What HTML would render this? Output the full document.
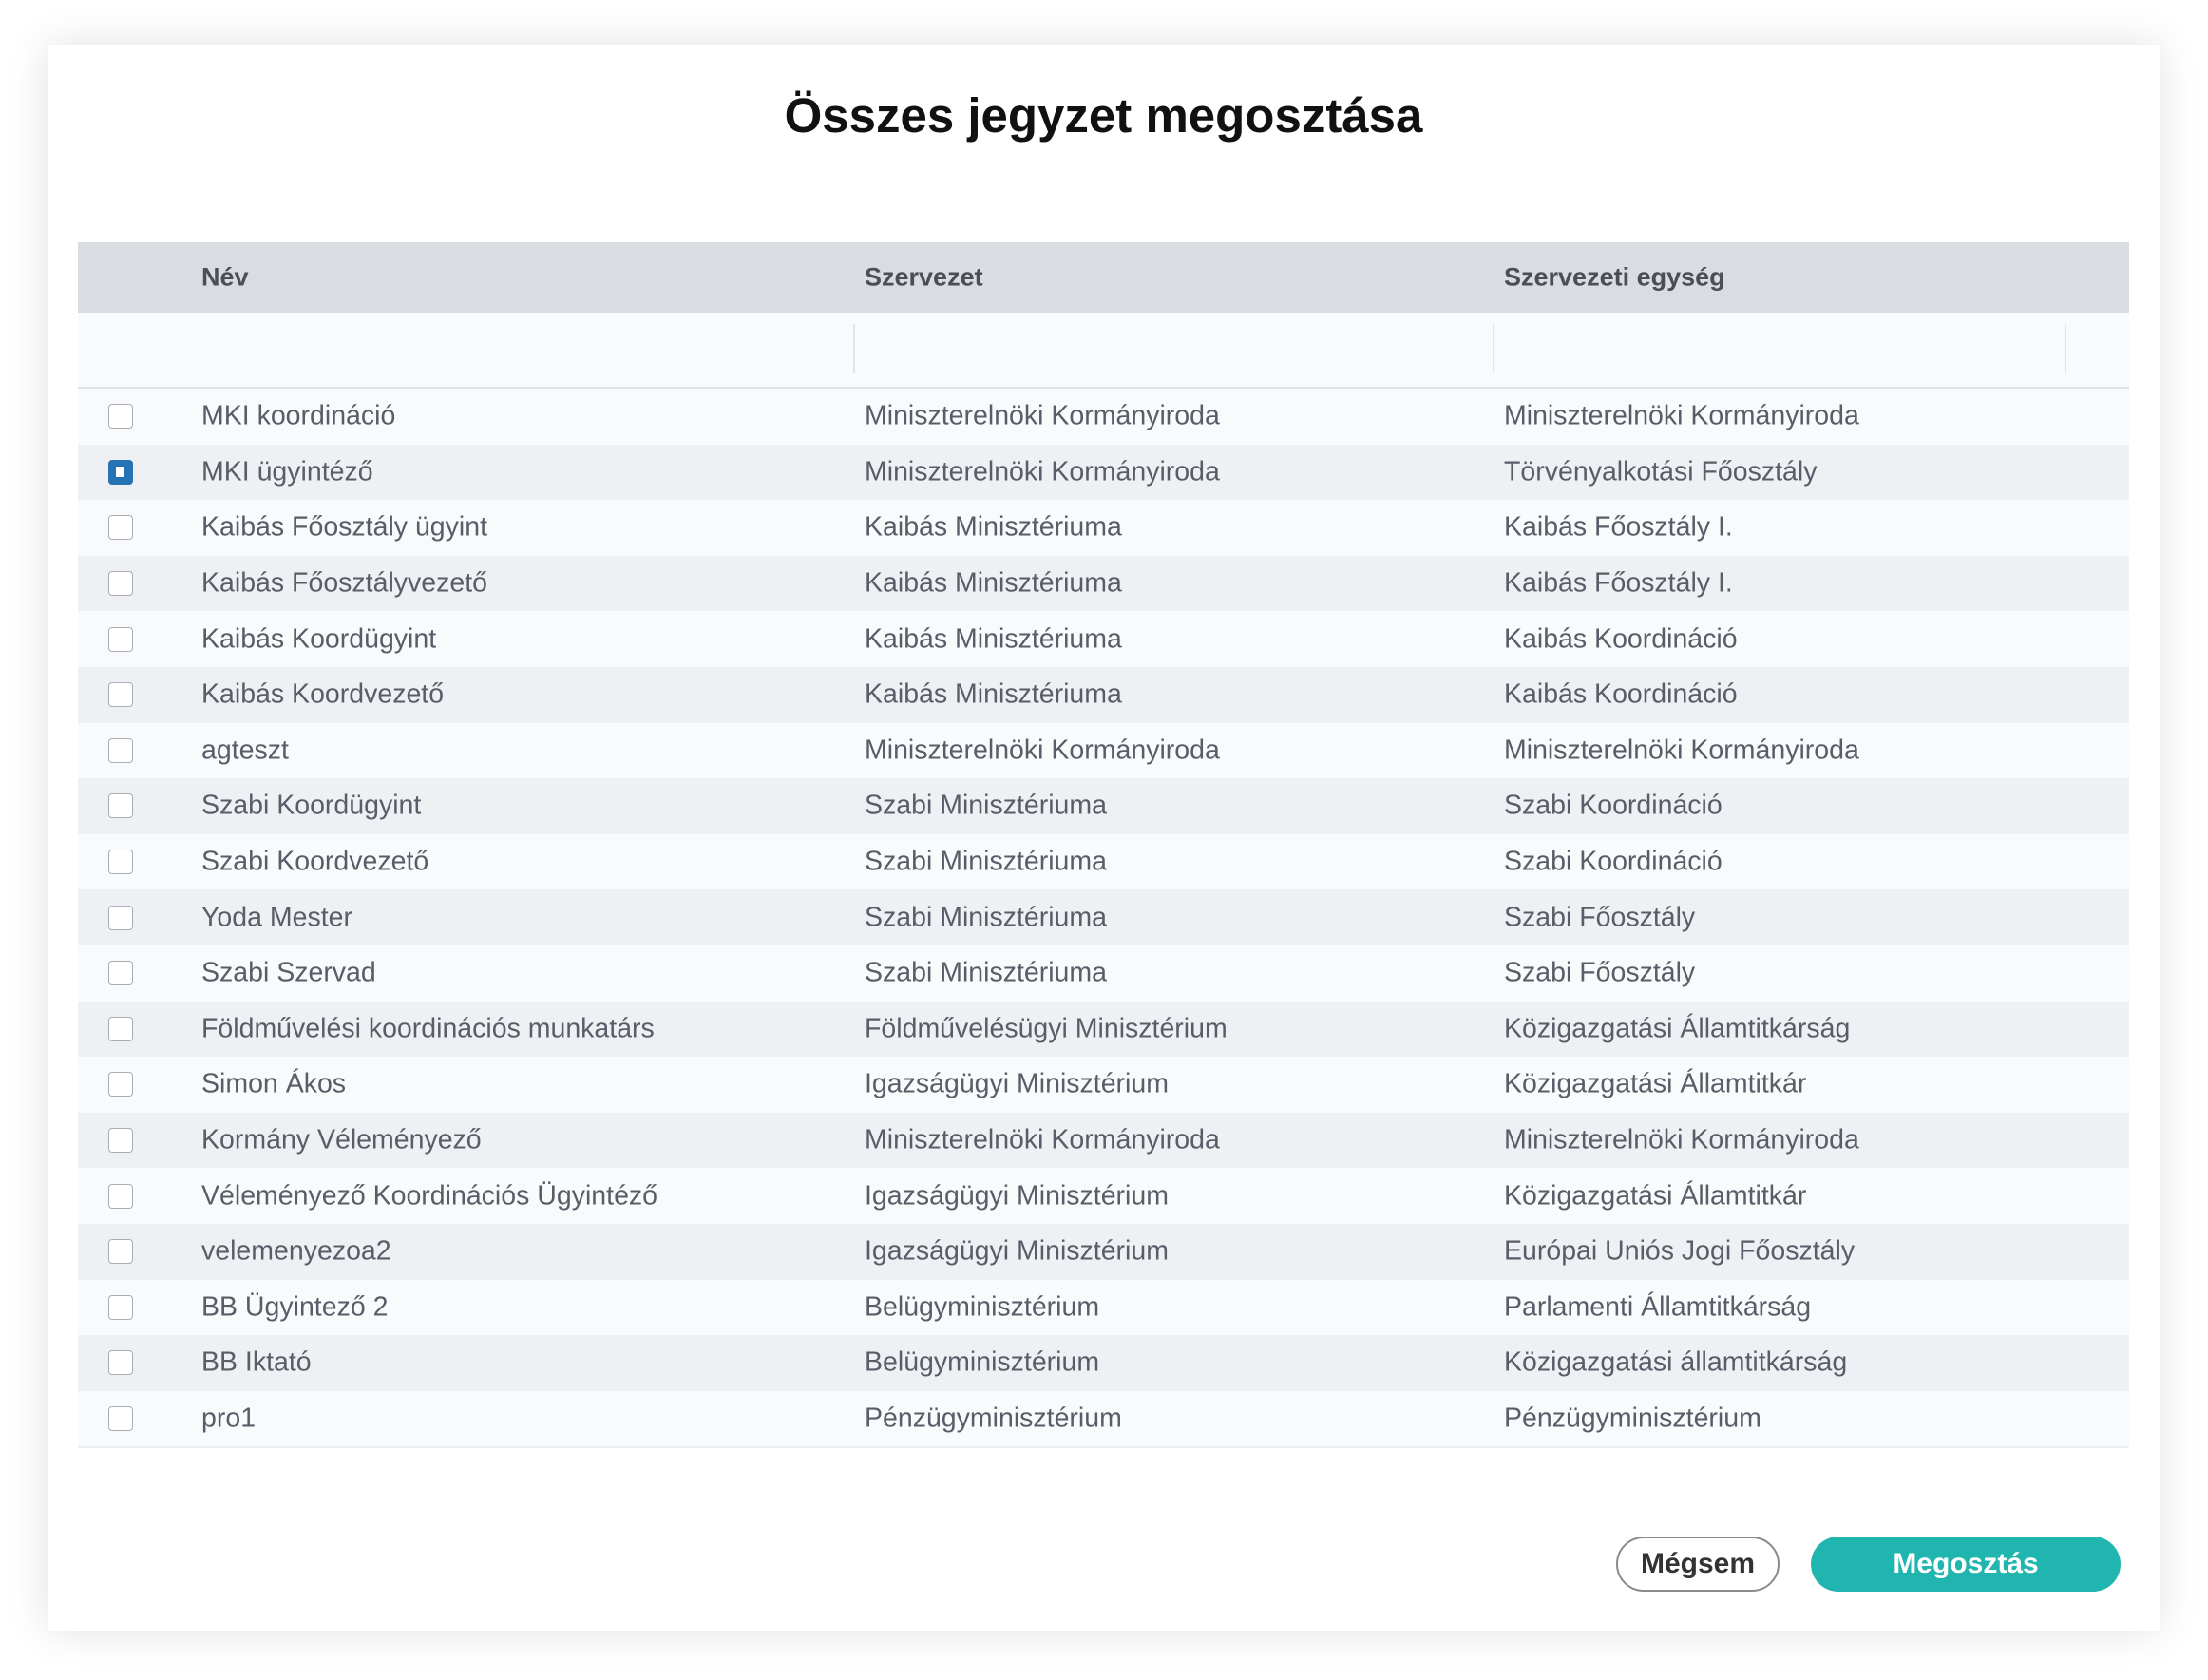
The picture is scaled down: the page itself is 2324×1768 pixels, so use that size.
<!DOCTYPE html>
<html><head><meta charset="utf-8"><style>
html,body{margin:0;padding:0;}
body{width:2324px;height:1768px;background:#fff;position:relative;overflow:hidden;font-family:"Liberation Sans",sans-serif;}
.dlg{position:absolute;left:50px;top:47px;width:2223px;height:1669px;background:#fff;box-shadow:0 0 40px rgba(0,0,0,0.12);}
h1{position:absolute;left:0;right:0;top:40px;margin:0;text-align:center;font-size:51px;font-weight:bold;color:#111;line-height:70px;}
.tbl{position:absolute;left:32px;top:208px;width:2159px;}
.hd{height:74px;background:#d9dde2;position:relative;font-weight:bold;color:#4b4f55;font-size:27px;}
.hd span,.row span{position:absolute;top:50%;transform:translateY(-50%);white-space:nowrap;}
.flt{height:78px;background:#f9fafc;position:relative;border-bottom:2px solid #dfe2e6;}
.flt i{position:absolute;top:12px;height:52px;width:2px;background:#e2e4e8;}
.row{height:58.6px;position:relative;color:#585d68;font-size:28.5px;}
.row:nth-child(odd){background:#f9fafc;}
.row:nth-child(even){background:#eff0f4;}
.c0{left:32px;width:26px;height:26px;border:1.5px solid #a8acb3;border-radius:4px;background:#fff;box-sizing:border-box;}
.chk{background:#2673b3;border-color:#2673b3;}
.chk::after{content:"";position:absolute;left:7px;top:6px;width:9px;height:11px;background:#fff;}
.c1{left:130px}.c2{left:828px}.c3{left:1501px}
.btn{position:absolute;top:1570px;height:58px;border-radius:29px;font-weight:bold;font-size:30px;text-align:center;line-height:58px;box-sizing:border-box;}
</style></head><body>
<div class="dlg">
<h1>Összes jegyzet megosztása</h1>
<div class="tbl">
<div class="hd"><span class="c1">Név</span><span class="c2">Szervezet</span><span class="c3">Szervezeti egység</span></div>
<div class="flt"><i style="left:816px"></i><i style="left:1489px"></i><i style="left:2091px"></i></div>
<div>
<div class="row"><span class="c0"></span><span class="c1">MKI koordináció</span><span class="c2">Miniszterelnöki Kormányiroda</span><span class="c3">Miniszterelnöki Kormányiroda</span></div>
<div class="row"><span class="c0 chk"></span><span class="c1">MKI ügyintéző</span><span class="c2">Miniszterelnöki Kormányiroda</span><span class="c3">Törvényalkotási Főosztály</span></div>
<div class="row"><span class="c0"></span><span class="c1">Kaibás Főosztály ügyint</span><span class="c2">Kaibás Minisztériuma</span><span class="c3">Kaibás Főosztály I.</span></div>
<div class="row"><span class="c0"></span><span class="c1">Kaibás Főosztályvezető</span><span class="c2">Kaibás Minisztériuma</span><span class="c3">Kaibás Főosztály I.</span></div>
<div class="row"><span class="c0"></span><span class="c1">Kaibás Koordügyint</span><span class="c2">Kaibás Minisztériuma</span><span class="c3">Kaibás Koordináció</span></div>
<div class="row"><span class="c0"></span><span class="c1">Kaibás Koordvezető</span><span class="c2">Kaibás Minisztériuma</span><span class="c3">Kaibás Koordináció</span></div>
<div class="row"><span class="c0"></span><span class="c1">agteszt</span><span class="c2">Miniszterelnöki Kormányiroda</span><span class="c3">Miniszterelnöki Kormányiroda</span></div>
<div class="row"><span class="c0"></span><span class="c1">Szabi Koordügyint</span><span class="c2">Szabi Minisztériuma</span><span class="c3">Szabi Koordináció</span></div>
<div class="row"><span class="c0"></span><span class="c1">Szabi Koordvezető</span><span class="c2">Szabi Minisztériuma</span><span class="c3">Szabi Koordináció</span></div>
<div class="row"><span class="c0"></span><span class="c1">Yoda Mester</span><span class="c2">Szabi Minisztériuma</span><span class="c3">Szabi Főosztály</span></div>
<div class="row"><span class="c0"></span><span class="c1">Szabi Szervad</span><span class="c2">Szabi Minisztériuma</span><span class="c3">Szabi Főosztály</span></div>
<div class="row"><span class="c0"></span><span class="c1">Földművelési koordinációs munkatárs</span><span class="c2">Földművelésügyi Minisztérium</span><span class="c3">Közigazgatási Államtitkárság</span></div>
<div class="row"><span class="c0"></span><span class="c1">Simon Ákos</span><span class="c2">Igazságügyi Minisztérium</span><span class="c3">Közigazgatási Államtitkár</span></div>
<div class="row"><span class="c0"></span><span class="c1">Kormány Véleményező</span><span class="c2">Miniszterelnöki Kormányiroda</span><span class="c3">Miniszterelnöki Kormányiroda</span></div>
<div class="row"><span class="c0"></span><span class="c1">Véleményező Koordinációs Ügyintéző</span><span class="c2">Igazságügyi Minisztérium</span><span class="c3">Közigazgatási Államtitkár</span></div>
<div class="row"><span class="c0"></span><span class="c1">velemenyezoa2</span><span class="c2">Igazságügyi Minisztérium</span><span class="c3">Európai Uniós Jogi Főosztály</span></div>
<div class="row"><span class="c0"></span><span class="c1">BB Ügyintező 2</span><span class="c2">Belügyminisztérium</span><span class="c3">Parlamenti Államtitkárság</span></div>
<div class="row"><span class="c0"></span><span class="c1">BB Iktató</span><span class="c2">Belügyminisztérium</span><span class="c3">Közigazgatási államtitkárság</span></div>
<div class="row" style="border-bottom:2px solid #eceef1"><span class="c0"></span><span class="c1">pro1</span><span class="c2">Pénzügyminisztérium</span><span class="c3">Pénzügyminisztérium</span></div>
</div>
</div>
<div class="btn" style="left:1651px;width:172px;border:2px solid #8a8a8a;color:#333;background:#fff;line-height:54px">Mégsem</div>
<div class="btn" style="left:1856px;width:326px;background:#20b5ae;color:#fff">Megosztás</div>
</div>
</body></html>
